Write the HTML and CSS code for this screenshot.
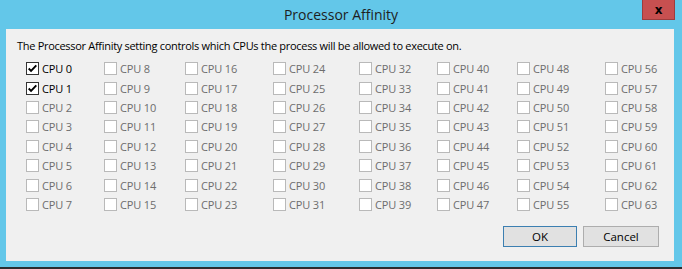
FILE: index.html
```html
<!DOCTYPE html>
<html lang="en">
<head>
    <meta charset="UTF-8">
    <title>Processor Affinity</title>
    <link rel="stylesheet" href="styles.css">
</head>
<body>
<div class="window">
    <div class="titlebar">
        <span class="title">Processor Affinity</span>
        <button class="close" type="button">x</button>
    </div>
    <div class="panel">
        <p class="intro">The Processor Affinity setting controls which CPUs the process will be allowed to execute on.</p>
        <div class="cpus" id="cpus"></div>
        <div class="actions">
            <button class="btn default" type="button">OK</button>
            <button class="btn" type="button">Cancel</button>
        </div>
    </div>
</div>

<script>
const list = document.getElementById('cpus');
const check = '<svg viewBox="0 0 13 13" width="11" height="11"><path d="M2 6.5 L4.8 9.4 L11 2.8" fill="none" stroke="#000" stroke-width="2.2"/></svg>';
for (let i = 0; i < 64; i++) {
    const on = i < 2;
    list.innerHTML += `<label class="cpu${on ? ' on' : ''}"><span class="box">${on ? check : ''}</span>CPU ${i}</label>`;
}
</script>
</body>
</html>
```

FILE: styles.css
```css
body {
    margin: 0;
    font-family: "Open Sans", "Noto Sans", sans-serif;
    background: #63c7e9;
}
.window {
    width: 682px;
    height: 267px;
    border-bottom: 2px solid #2b2d30;
    position: relative;
}
.titlebar {
    height: 29px;
    display: flex;
    justify-content: center;
    align-items: center;
}
.title {
    font-size: 14px;
    color: #1e1e1e;
    margin-top: -1px;
}
.close {
    position: absolute;
    top: 0;
    right: 7px;
    width: 33px;
    height: 20px;
    background: #c75050;
    border: 1px solid #9d3d3d;
    border-top: none;
    color: #000;
    font-family: "DejaVu Sans", sans-serif;
    font-weight: bold;
    font-size: 12px;
    line-height: 16px;
    padding: 0;
}
.panel {
    margin-left: 6px;
    width: 668px;
    height: 232px;
    background: #f0f0f0;
    box-sizing: border-box;
    padding: 8px 15px 14px 11px;
    display: flex;
    flex-direction: column;
}
.intro {
    margin: 0;
    font-size: 11px;
    letter-spacing: -0.3px;
    line-height: 17px;
    color: #000;
}
.cpus {
    margin: 5px 0 0 9px;
    display: grid;
    grid-auto-flow: column;
    grid-template-rows: repeat(8, 19.43px);
    grid-template-columns: 78px 81px 88px 86px 78px 80px 88px auto;
}
.cpu {
    display: flex;
    align-items: center;
    font-size: 11px;
    letter-spacing: -0.15px;
    color: #6d6d6d;
    white-space: nowrap;
}
.cpu.on {
    color: #000;
}
.box {
    width: 11px;
    height: 11px;
    border: 1px solid #b9b9b9;
    background: #fff;
    margin-right: 3px;
    display: flex;
    align-items: center;
    justify-content: center;
}
.cpu.on .box {
    border-color: #333;
}
.actions {
    margin-top: auto;
    display: flex;
    justify-content: flex-end;
    gap: 6px;
}
.btn {
    width: 76px;
    height: 21px;
    background: #e1e1e1;
    border: 1px solid #adadad;
    font-family: "Open Sans", "Noto Sans", sans-serif;
    font-size: 11.5px;
    color: #000;
    padding: 0;
}
.btn.default {
    width: 74px;
    border-color: #3c7fb1;
}
```
